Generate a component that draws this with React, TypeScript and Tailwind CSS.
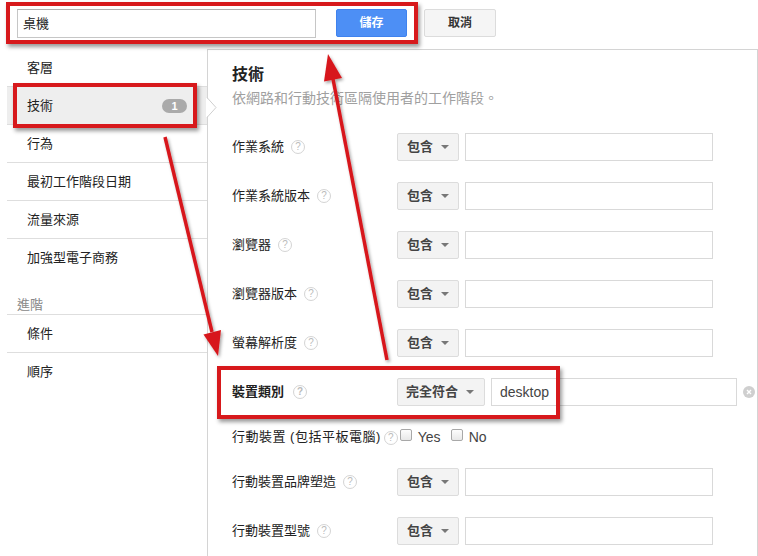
import React from "react";

function Help() {
  return (
    <span className="inline-flex w-[14px] h-[14px] shrink-0 rounded-full border border-[#d4d4d4] items-center justify-center text-[10px] leading-none text-[#bbbbbb] font-['Liberation_Sans',sans-serif]">
      ?
    </span>
  );
}

function Caret() {
  return (
    <span className="w-0 h-0 border-l-[4px] border-r-[4px] border-t-[4px] border-l-transparent border-r-transparent border-t-[#777777]" />
  );
}

function Select({ label, wide }: { label: string; wide?: boolean }) {
  return (
    <div
      className={
        wide
          ? "flex items-center justify-between h-[28px] w-[88px] bg-[#f3f3f3] border border-[#dcdcdc] rounded-[2px] pl-[8px] pr-[10px]"
          : "flex items-center justify-between h-[28px] w-[62px] bg-[#f3f3f3] border border-[#dcdcdc] rounded-[2px] pl-[9px] pr-[9px]"
      }
    >
      <span className="text-[13px] font-bold text-[#444444] leading-[16px]">{label}</span>
      <Caret />
    </div>
  );
}

function FilterRow({ label }: { label: string }) {
  return (
    <div className="flex items-center h-[28px]">
      <div className="w-[165px] flex items-center gap-[7px] text-[13px] leading-[16px] text-[#222222]">
        <span>{label}</span>
        <Help />
      </div>
      <Select label="包含" />
      <div className="ml-[6px] w-[248px] h-[28px] border border-[#d9d9d9] bg-white" />
    </div>
  );
}

function SideItem({ label, border = true }: { label: string; border?: boolean }) {
  return (
    <div
      className={
        border
          ? "h-[38px] flex items-center pl-[20px] border-b border-[#dedede] text-[13px] leading-[16px] text-[#222222]"
          : "h-[38px] flex items-center pl-[20px] text-[13px] leading-[16px] text-[#222222]"
      }
    >
      {label}
    </div>
  );
}

function Checkbox() {
  return (
    <span className="inline-block w-[12px] h-[12px] border border-[#a8a8a8] rounded-[2px] bg-gradient-to-b from-[#fdfdfd] to-[#e8e8e8] -mt-[4px]" />
  );
}

export default function App() {
  return (
    <div className="relative w-[758px] h-[556px] overflow-hidden bg-white font-['Liberation_Sans','Noto_Sans_CJK_TC',sans-serif] text-[#222222]">
      {/* top bar */}
      <div className="h-[49px] flex items-start pt-[9px] pl-[17px]">
        <div className="w-[299px] h-[29px] border border-[#c6c6c6] border-t-[#b0b0b0] bg-white flex items-center pl-[5px] text-[13px] leading-[16px] text-[#222222]">
          桌機
        </div>
        <div className="ml-[20px] w-[71px] h-[28px] rounded-[2px] bg-[#4d8ff5] border border-[#3f82ee] flex items-center justify-center text-[12px] font-bold text-white leading-[16px]">
          儲存
        </div>
        <div className="ml-[17px] w-[72px] h-[28px] rounded-[2px] bg-[#f5f5f5] border border-[#dcdcdc] flex items-center justify-center text-[12px] font-bold text-[#333333] leading-[16px]">
          取消
        </div>
      </div>

      {/* main */}
      <div className="flex h-[507px]">
        {/* sidebar */}
        <div className="w-[200px] ml-[7px] flex flex-col">
          <SideItem label="客層" />
          <div className="h-[38px] flex items-center justify-between pl-[20px] pr-[20px] border-b border-[#dedede] bg-[#eeeeee] text-[13px] leading-[16px] text-[#222222]">
            <span>技術</span>
            <span className="w-[25px] h-[14px] rounded-full bg-[#aaaaaa] text-white text-[11px] font-bold leading-[14px] text-center">
              1
            </span>
          </div>
          <SideItem label="行為" />
          <SideItem label="最初工作階段日期" />
          <SideItem label="流量來源" />
          <SideItem label="加強型電子商務" border={false} />
          <div className="h-[38px] flex items-end pl-[10px] pb-[1px] border-b border-[#dedede] text-[13px] leading-[16px] text-[#888888]">
            進階
          </div>
          <SideItem label="條件" />
          <SideItem label="順序" border={false} />
        </div>

        {/* panel */}
        <div className="w-[551px] border-l border-t border-r border-[#d4d4d4] pl-[24px] pt-[13px] flex flex-col">
          <div className="text-[16px] font-bold leading-[24px] text-[#222222]">技術</div>
          <div className="mt-[1px] text-[14px] leading-[20px] text-[#a0a0a0]">
            依網路和行動技術區隔使用者的工作階段。
          </div>

          <div className="mt-[25px] flex flex-col gap-[21px]">
            <FilterRow label="作業系統" />
            <FilterRow label="作業系統版本" />
            <FilterRow label="瀏覽器" />
            <FilterRow label="瀏覽器版本" />
            <FilterRow label="螢幕解析度" />

            <div className="flex items-center h-[28px]">
              <div className="w-[165px] flex items-center gap-[9px] text-[13px] leading-[16px] font-bold text-[#222222]">
                <span>裝置類別</span>
                <Help />
              </div>
              <Select label="完全符合" wide />
              <div className="ml-[6px] w-[246px] h-[28px] border border-[#d9d9d9] bg-white flex items-center pl-[8px] text-[14px] leading-[16px] text-[#444444]">
                desktop
              </div>
              <span className="ml-[6px] w-[12px] h-[12px] rounded-full bg-[#cfcfcf] flex items-center justify-center">
                <svg width="6" height="6" viewBox="0 0 6 6">
                  <path d="M1 1L5 5M5 1L1 5" stroke="#ffffff" strokeWidth="1.4" />
                </svg>
              </span>
            </div>

            <div className="flex items-center h-[20px] text-[13px] leading-[16px] text-[#222222]">
              <span className="tracking-[0.5px]">行動裝置 (包括平板電腦)</span>
              <span className="ml-[3px]">
                <Help />
              </span>
              <span className="ml-[2px] flex items-center">
                <Checkbox />
              </span>
              <span className="ml-[6px] text-[14px] text-[#444444]">Yes</span>
              <span className="ml-[10px] flex items-center">
                <Checkbox />
              </span>
              <span className="ml-[6px] text-[14px] text-[#444444]">No</span>
            </div>

            <FilterRow label="行動裝置品牌塑造" />
            <FilterRow label="行動裝置型號" />
          </div>
        </div>
      </div>

      {/* selected pointer */}
      <svg className="absolute left-[206px] top-[97px]" width="12" height="21" viewBox="0 0 12 21">
        <polygon points="0,0 10,10.5 0,21" fill="#ffffff" />
        <polyline points="1,0.5 10,10.5 1,20.5" fill="none" stroke="#cfcfcf" strokeWidth="1" />
      </svg>

      {/* red annotation boxes */}
      <div className="absolute left-[6px] top-[2px] w-[412px] h-[42px] border-[4px] border-[#d7191c] shadow-[2px_3px_4px_rgba(0,0,0,0.4)]" />
      <div className="absolute left-[13px] top-[83px] w-[184px] h-[45px] border-[4px] border-[#d7191c] shadow-[2px_3px_4px_rgba(0,0,0,0.4)]" />
      <div className="absolute left-[217px] top-[366px] w-[343px] h-[53px] border-[4px] border-[#d7191c] shadow-[2px_3px_4px_rgba(0,0,0,0.4)]" />

      {/* red arrows */}
      <svg className="absolute left-0 top-0 pointer-events-none" width="758" height="556" viewBox="0 0 758 556">
        <defs>
          <filter id="sh" x="-20%" y="-20%" width="140%" height="140%">
            <feDropShadow dx="1.5" dy="2" stdDeviation="1.5" floodColor="#000000" floodOpacity="0.35" />
          </filter>
        </defs>
        <g filter="url(#sh)" fill="#d7191c" stroke="#d7191c">
          <line x1="165" y1="137" x2="212" y2="332" strokeWidth="3.5" />
          <polygon points="221,330 203.5,334.5 218,356" stroke="none" />
          <line x1="387" y1="360" x2="333" y2="79" strokeWidth="3.5" />
          <polygon points="342,78 324,81.5 328,54" stroke="none" />
        </g>
      </svg>
    </div>
  );
}
